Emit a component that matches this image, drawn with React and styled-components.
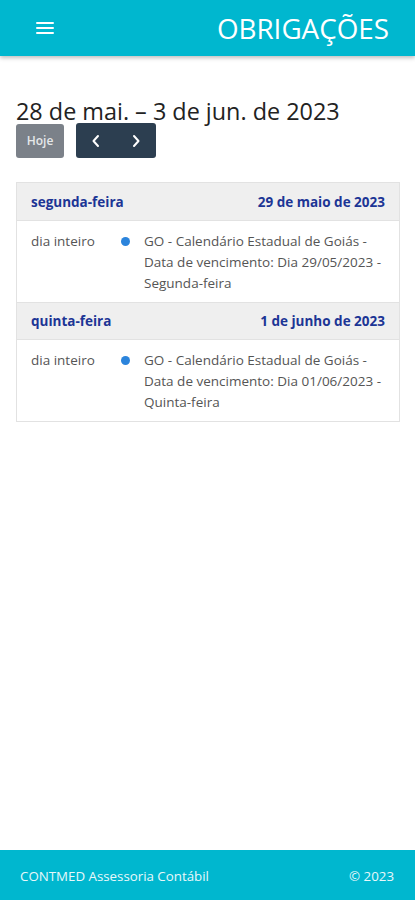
import React from "react";
import styled, { createGlobalStyle } from "styled-components";

const Global = createGlobalStyle`
  html, body { margin: 0; padding: 0; }
  body { font-family: "Open Sans", "Noto Sans", sans-serif; background: #fff; }
  * { box-sizing: border-box; }
`;

const Page = styled.div`
  min-height: 100vh;
  display: flex;
  flex-direction: column;
`;

const TopBar = styled.header`
  height: 56px;
  background: #00b7cf;
  box-shadow: 0 2px 4px rgba(0,0,0,0.25);
  display: flex;
  align-items: center;
  justify-content: space-between;
  padding: 0 26px 0 36px;
  color: #fff;
`;

const MenuButton = styled.div`
  width: 18px;
  display: flex;
  flex-direction: column;
  gap: 2.5px;
  span {
    display: block;
    height: 2.5px;
    background: #fff;
    border-radius: 1px;
  }
`;

const Title = styled.h1`
  margin: 0;
  font-size: 27.8px;
  font-weight: 400;
  letter-spacing: 0;
`;

const Main = styled.main`
  flex: 1;
  padding: 41px 15px 0 16px;
`;

const RangeTitle = styled.h2`
  margin: 0;
  font-size: 23.4px;
  font-weight: 400;
  color: #222;
  line-height: 29px;
`;

const Toolbar = styled.div`
  display: flex;
  align-items: center;
  gap: 12px;
  margin-top: -3px;
`;

const TodayButton = styled.button`
  height: 34px;
  width: 48px;
  border: none;
  border-radius: 3px;
  background: #7b8189;
  color: #e6e8ea;
  font-family: inherit;
  font-size: 12px;
  font-weight: 600;
  padding: 0;
`;

const NavGroup = styled.div`
  display: flex;
  height: 35px;
  width: 80px;
  background: #2c3e50;
  border-radius: 3px;
`;

const NavButton = styled.button`
  flex: 1;
  border: none;
  background: transparent;
  color: #fff;
  display: flex;
  align-items: center;
  justify-content: center;
  padding: 0;
`;

const List = styled.div`
  margin-top: 24px;
  border: 1px solid #e2e2e2;
`;

const DayHeader = styled.div`
  display: flex;
  justify-content: space-between;
  align-items: center;
  height: 38px;
  padding: 0 14px;
  background: #efefef;
  border-top: ${(p) => (p.$first ? "none" : "1px solid #e2e2e2")};
  border-bottom: 1px solid #e2e2e2;
  color: #1c3595;
  font-size: 13.5px;
  font-weight: 700;
`;

const EventRow = styled.div`
  display: grid;
  grid-template-columns: 89px 24px 1fr;
  padding: 10px 12px 8px 14px;
  font-size: 13.5px;
  line-height: 21px;
  color: #555;
`;

const Dot = styled.span`
  width: 9px;
  height: 9px;
  border-radius: 50%;
  background: #2b84dc;
  margin: 6px 0 0 1px;
`;

const Footer = styled.footer`
  height: 50px;
  background: #00b7cf;
  display: flex;
  align-items: center;
  justify-content: space-between;
  padding: 2px 21px 0 20px;
  color: #e8f8fb;
  font-size: 13.3px;
`;

const Chevron = ({ dir }) => (
  <svg width="12" height="14" viewBox="0 0 12 14" fill="none" stroke="#fff" strokeWidth="2" strokeLinecap="round" strokeLinejoin="round">
    {dir === "left" ? <path d="M8 2 L3.5 7 L8 12" /> : <path d="M4 2 L8.5 7 L4 12" />}
  </svg>
);

const days = [
  {
    weekday: "segunda-feira",
    date: "29 de maio de 2023",
    text: "GO - Calendário Estadual de Goiás - Data de vencimento: Dia 29/05/2023 - Segunda-feira",
  },
  {
    weekday: "quinta-feira",
    date: "1 de junho de 2023",
    text: "GO - Calendário Estadual de Goiás - Data de vencimento: Dia 01/06/2023 - Quinta-feira",
  },
];

export default function App() {
  return (
    <Page>
      <Global />
      <TopBar>
        <MenuButton>
          <span />
          <span />
          <span />
        </MenuButton>
        <Title>OBRIGAÇÕES</Title>
      </TopBar>
      <Main>
        <RangeTitle>28 de mai. – 3 de jun. de 2023</RangeTitle>
        <Toolbar>
          <TodayButton>Hoje</TodayButton>
          <NavGroup>
            <NavButton><Chevron dir="left" /></NavButton>
            <NavButton><Chevron dir="right" /></NavButton>
          </NavGroup>
        </Toolbar>
        <List>
          {days.map((d, i) => (
            <React.Fragment key={d.date}>
              <DayHeader $first={i === 0}>
                <span>{d.weekday}</span>
                <span>{d.date}</span>
              </DayHeader>
              <EventRow>
                <span>dia inteiro</span>
                <Dot />
                <span>{d.text}</span>
              </EventRow>
            </React.Fragment>
          ))}
        </List>
      </Main>
      <Footer>
        <span>CONTMED Assessoria Contábil</span>
        <span>© 2023</span>
      </Footer>
    </Page>
  );
}
